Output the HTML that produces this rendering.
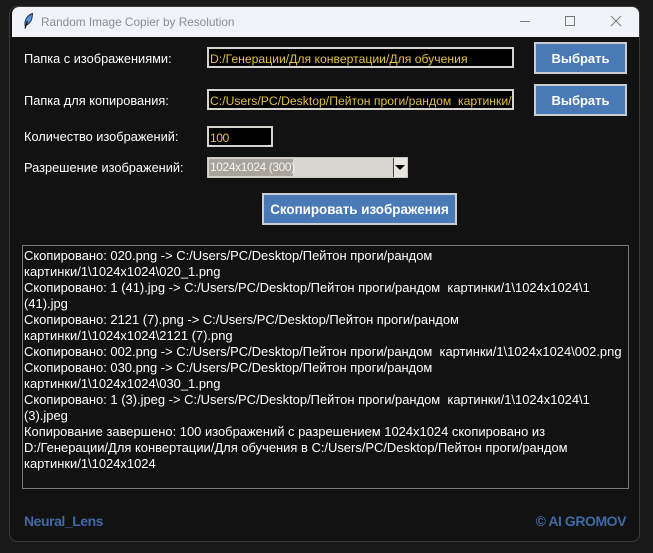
<!DOCTYPE html>
<html><head><meta charset="utf-8"><style>
html,body{margin:0;padding:0;width:653px;height:553px;overflow:hidden;background:#191919;}
*{box-sizing:border-box}
body{font-family:"Liberation Sans",sans-serif;position:relative}
.a{position:absolute;white-space:pre}
#win{position:absolute;left:9px;top:6px;width:631px;height:536px;background:#121212;border:1px solid #3c3c3c;border-radius:8px;}
#tb{position:absolute;left:12px;top:7px;width:627px;height:30px;background:#f2f3f8;border-radius:7px 7px 0 0;}
.l{color:#fff;font-size:12.8px;line-height:16px}
.e{background:#000;border:2px solid #d6d3ce;color:#e3c04a;font-size:12.2px;line-height:16px;overflow:hidden;padding:2px 0 0 1px}
.b{background:#4a7ab5;border:2px solid #c9ccd0;color:#fff;font-weight:bold;font-size:13px;text-align:center}
#log{white-space:normal}
#log div{height:16px;line-height:16px;white-space:pre}
</style></head><body>
<div id="win"></div>
<div id="tb"></div>
<svg class="a" style="left:22px;top:12px" width="14" height="18" viewBox="0 0 14 18"><path d="M10.500 1.500C7 2.500 3.500 6 3 10.500L3 13.500C6 13 9 10 10 6Z" fill="#5a93e0" stroke="#1c2c44" stroke-width="1"/><path d="M5.500 9L3 16.500" stroke="#111" stroke-width="1.200" fill="none"/></svg>
<div class="a" style="left:41px;top:14px;font-size:11.8px;line-height:16px;color:#8a8c90">Random Image Copier by Resolution</div>
<svg class="a" style="left:515px;top:12px" width="110" height="18" viewBox="0 0 110 18" fill="none" stroke="#7a7a7a" stroke-width="1"><path d="M5 9.500H15"/><rect x="50.500" y="4.500" width="9" height="9"/><path d="M96 4L106 14M106 4L96 14"/></svg>

<div class="a l" style="left:24px;top:51px">Папка с изображениями:</div>
<div class="a e" style="left:207px;top:47px;width:307px;height:21px">D:/Генерации/Для конвертации/Для обучения</div>
<div class="a b" style="left:534px;top:42px;width:93px;height:32px;line-height:29px">Выбрать</div>

<div class="a l" style="left:24px;top:93px">Папка для копирования:</div>
<div class="a e" style="left:207px;top:89px;width:307px;height:21px">C:/Users/PC/Desktop/Пейтон проги/рандом  картинки/1</div>
<div class="a b" style="left:534px;top:84px;width:93px;height:32px;line-height:29px">Выбрать</div>

<div class="a l" style="left:24px;top:129px">Количество изображений:</div>
<div class="a e" style="left:207px;top:126px;width:66px;height:21px;letter-spacing:-.5px">100</div>

<div class="a l" style="left:24px;top:160px">Разрешение изображений:</div>
<div class="a" style="left:207px;top:157px;width:201px;height:21px;background:#d8d6d0;border:1px solid #c8c5be"></div>
<div class="a" style="left:209px;top:159px;width:84px;height:17px;background:#a8a49c;color:#f4f4f4;font-size:12px;letter-spacing:-.4px;line-height:17px;padding-left:1px">1024x1024 (300)</div>
<div class="a" style="left:393px;top:158px;width:14px;height:19px;background:#e8e6e0;border-left:1px solid #444"></div>
<svg class="a" style="left:395px;top:165px" width="11" height="6"><path d="M0 0H10L5 5Z" fill="#000"/></svg>

<div class="a b" style="left:262px;top:193px;width:195px;height:32px;line-height:29px;font-size:13.4px">Скопировать изображения</div>

<div class="a" style="left:22px;top:245px;width:607px;height:244px;border:1px solid #7a7a7a;background:#121212"></div>
<div id="log" class="a" style="left:24px;top:248px;font-size:12.95px;color:#fff"><div>Скопировано: 020.png -&gt; C:/Users/PC/Desktop/Пейтон проги/рандом</div><div>картинки/1\1024x1024\020_1.png</div><div>Скопировано: 1 (41).jpg -&gt; C:/Users/PC/Desktop/Пейтон проги/рандом  картинки/1\1024x1024\1</div><div>(41).jpg</div><div>Скопировано: 2121 (7).png -&gt; C:/Users/PC/Desktop/Пейтон проги/рандом</div><div>картинки/1\1024x1024\2121 (7).png</div><div>Скопировано: 002.png -&gt; C:/Users/PC/Desktop/Пейтон проги/рандом  картинки/1\1024x1024\002.png</div><div>Скопировано: 030.png -&gt; C:/Users/PC/Desktop/Пейтон проги/рандом</div><div>картинки/1\1024x1024\030_1.png</div><div>Скопировано: 1 (3).jpeg -&gt; C:/Users/PC/Desktop/Пейтон проги/рандом  картинки/1\1024x1024\1</div><div>(3).jpeg</div><div>Копирование завершено: 100 изображений с разрешением 1024x1024 скопировано из</div><div>D:/Генерации/Для конвертации/Для обучения в C:/Users/PC/Desktop/Пейтон проги/рандом</div><div>картинки/1\1024x1024</div></div>

<div class="a" style="left:24px;top:513px;font-size:14px;letter-spacing:-.45px;font-weight:bold;line-height:16px;color:#3f6aa6">Neural_Lens</div>
<div class="a" style="right:27px;top:513px;font-size:14px;letter-spacing:-.45px;font-weight:bold;line-height:16px;color:#3f6aa6">© AI GROMOV</div>
</body></html>
